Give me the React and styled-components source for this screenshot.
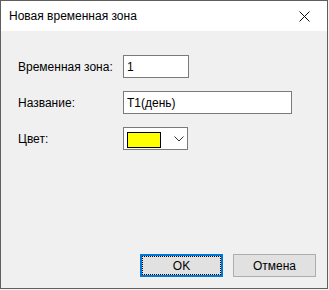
import React from "react";
import styled, { createGlobalStyle } from "styled-components";

const GlobalStyle = createGlobalStyle`
  html, body {
    margin: 0;
    padding: 0;
    background: #f3f3f3;
  }
  body {
    font-family: "Liberation Sans", Arial, sans-serif;
    font-size: 12px;
    color: #000;
  }
`;

const Window = styled.div`
  width: 328px;
  height: 289px;
  box-sizing: border-box;
  border: 1px solid #5f5f5f;
  display: flex;
  flex-direction: column;
  background: #f0f0f0;
`;

const TitleBar = styled.div`
  height: 30px;
  flex: none;
  background: #fff;
  display: flex;
  align-items: center;
  justify-content: space-between;
  padding: 0 0 0 8px;
`;

const Title = styled.span`
  font-size: 12px;
  margin-top: -1px;
`;

const CloseBox = styled.div`
  width: 46px;
  height: 30px;
  display: flex;
  align-items: center;
  justify-content: center;
`;

const Body = styled.div`
  flex: 1;
  display: flex;
  flex-direction: column;
  padding: 24px 11px 11px 17px;
`;

const Form = styled.div`
  display: grid;
  grid-template-columns: 105px auto;
  row-gap: 13px;
  align-items: center;
`;

const Label = styled.label`
  font-size: 12px;
`;

const TextInput = styled.div`
  box-sizing: border-box;
  width: ${(p) => p.$w}px;
  height: 23px;
  border: 1px solid #7a7a7a;
  background: #fff;
  display: flex;
  align-items: center;
  padding-left: 3px;
`;

const Combo = styled.div`
  box-sizing: border-box;
  width: 65px;
  height: 23px;
  border: 1px solid #7a7a7a;
  background: #fff;
  display: flex;
  align-items: center;
  padding-left: 3px;
  gap: 13px;
`;

const Swatch = styled.div`
  box-sizing: border-box;
  width: 34px;
  height: 16px;
  margin-top: 2px;
  border: 1px solid #000;
  background: ${(p) => p.$color};
`;

const Buttons = styled.div`
  margin-top: auto;
  display: flex;
  justify-content: flex-end;
  gap: 10px;
`;

const Button = styled.button`
  position: relative;
  box-sizing: border-box;
  width: 83px;
  height: 23px;
  font-family: "Liberation Sans", Arial, sans-serif;
  font-size: 12px;
  color: #000;
  background: #e1e1e1;
  border: ${(p) => (p.$default ? "2px solid #0078d7" : "1px solid #adadad")};
  padding: 0;
  &::after {
    content: "";
    display: ${(p) => (p.$default ? "block" : "none")};
    position: absolute;
    inset: 0;
    border: 1px dotted #000;
  }
`;

export default function App() {
  return (
    <>
      <GlobalStyle />
      <Window>
        <TitleBar>
          <Title>Новая временная зона</Title>
          <CloseBox>
            <svg width="11" height="11" viewBox="0 0 11 11">
              <path d="M0.5 0.5 L10.5 10.5 M10.5 0.5 L0.5 10.5" stroke="#111" strokeWidth="1" />
            </svg>
          </CloseBox>
        </TitleBar>
        <Body>
          <Form>
            <Label>Временная зона:</Label>
            <TextInput $w={66}>1</TextInput>
            <Label>Название:</Label>
            <TextInput $w={169}>T1(день)</TextInput>
            <Label>Цвет:</Label>
            <Combo>
              <Swatch $color="#ffff00" />
              <svg width="10" height="6" viewBox="0 0 10 6">
                <path d="M0.5 0.5 L5 5 L9.5 0.5" fill="none" stroke="#333" strokeWidth="1" />
              </svg>
            </Combo>
          </Form>
          <Buttons>
            <Button $default>OK</Button>
            <Button>Отмена</Button>
          </Buttons>
        </Body>
      </Window>
    </>
  );
}
